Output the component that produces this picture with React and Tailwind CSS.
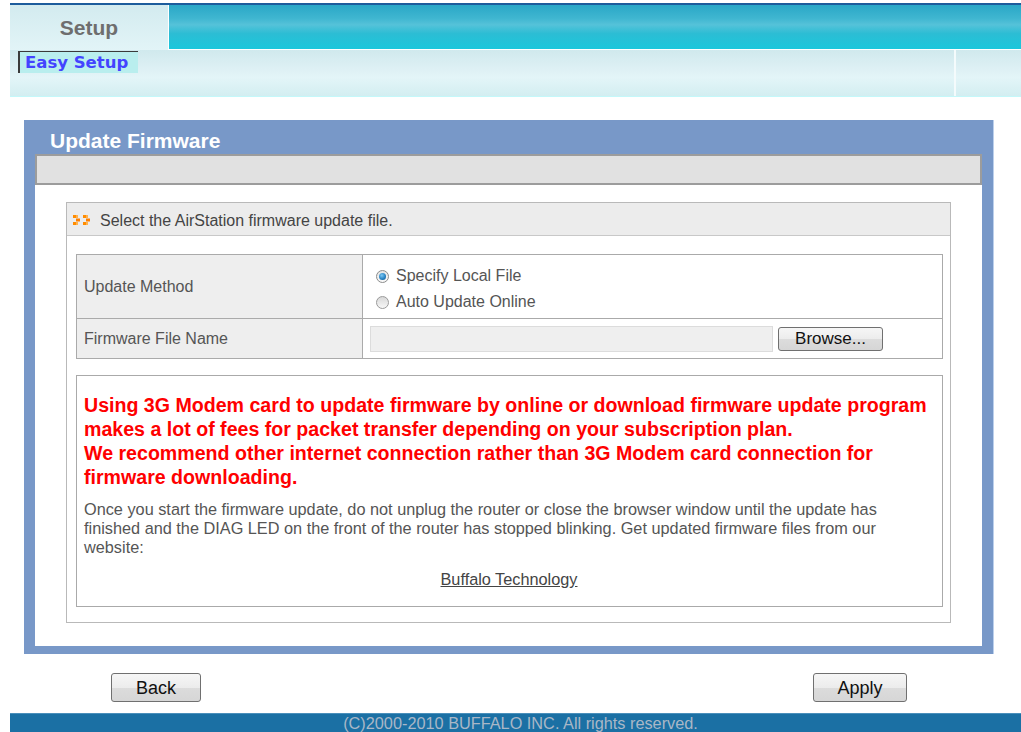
export default function App() {
  const teal =
    "bg-[linear-gradient(to_bottom,#2aa7c7_0%,#3fb6d0_30%,#55c2d9_45%,#2cbdd4_65%,#1ac7dc_100%)]";
  const pale =
    "bg-[linear-gradient(to_bottom,#d0e9ed_0%,#dff1f5_45%,#e3f5f8_60%,#d3eef1_100%)]";
  const btn =
    "rounded-[3px] border border-[#707070] bg-[linear-gradient(to_bottom,#f6f6f6_0%,#ececec_50%,#dcdcdc_51%,#d6d6d6_100%)] leading-none text-[#111]";

  return (
    <div className="w-[1021px] h-[732px] overflow-hidden bg-white font-['Liberation_Sans',Arial,sans-serif] flex flex-col">
      {/* navigation header */}
      <header className="ml-[10px] pt-[3px]">
        <div className="h-[2px] bg-[#1d5c9c]" />
        <div className="flex h-[45px]">
          <div className="w-[159px] border-r border-white bg-[linear-gradient(to_bottom,#d3ebef,#e2f4f7)] flex items-center justify-center">
            <span className="text-[21px] font-bold text-[#6e6e6e] leading-none">Setup</span>
          </div>
          <div className={`flex-1 border-b border-white ${teal}`} />
        </div>
        <div className="flex h-[47px] border-b border-[#c4f8fa]">
          <div className={`flex-1 ${pale}`}>
            <div className="ml-[8px] mt-[1px] w-[120px] h-[22px] border-l-[2px] border-t border-[#3a3a3a] bg-[#b9eeee] flex items-center pl-[5px] pt-[2px]">
              <span className="font-['DejaVu_Sans',Verdana,sans-serif] font-bold text-[16.5px] text-[#4343ff] leading-none">
                Easy Setup
              </span>
            </div>
          </div>
          <div className="w-[2px] bg-[#f4fbfc]" />
          <div className={`w-[65px] ${pale}`} />
        </div>
      </header>

      {/* main panel */}
      <section className="mt-[23px] ml-[24px] w-[970px] bg-[#7898c8] px-[11px] pb-[8px] border-r border-[#bcd0ec]">
        <div className="h-[34px] pl-[15px] pt-[9px]">
          <h1 className="text-[21px] leading-[24px] font-bold text-white">Update Firmware</h1>
        </div>
        <div className="bg-white h-[492px] flex flex-col">
          <div className="h-[31px] border-2 border-[#9c9c9c] bg-[#e1e1e1]" />

          <div className="mx-[31px] mt-[17px] h-[421px] border border-[#b9b9b9]">
            <div className="h-[33px] bg-[#ececec] border-b border-[#c8c8c8] flex items-center pl-[6px] pt-[3px]">
              <svg width="20" height="10" viewBox="0 0 20 10" className="mr-[7px] mb-[2px]">
                <rect x="0" y="0" width="3" height="3" fill="#ff8c00" />
                <rect x="3" y="0" width="2" height="3" fill="#ffb24d" />
                <rect x="3" y="3.5" width="4" height="3" fill="#ff8000" />
                <rect x="0" y="7" width="3" height="3" fill="#ff8c00" />
                <rect x="3" y="7" width="2" height="3" fill="#ffb24d" />
                <rect x="10" y="0" width="3" height="3" fill="#ff8c00" />
                <rect x="13" y="0" width="2" height="3" fill="#ffb24d" />
                <rect x="13" y="3.5" width="4" height="3" fill="#ff8000" />
                <rect x="10" y="7" width="3" height="3" fill="#ff8c00" />
                <rect x="13" y="7" width="2" height="3" fill="#ffb24d" />
              </svg>
              <span className="text-[16px] text-[#444]">Select the AirStation firmware update file.</span>
            </div>

            {/* settings table */}
            <div className="ml-[9px] mt-[18px] w-[867px] border border-[#aaaaaa] text-[16px]">
              <div className="flex h-[64px] border-b border-[#aaaaaa]">
                <div className="w-[286px] border-r border-[#aaaaaa] bg-[#eeeeee] flex items-center pl-[7px] pt-[1px] text-[#555]">
                  Update Method
                </div>
                <div className="flex-1 pl-[13px] pt-[8px] text-[#555]">
                  <label className="flex items-center h-[26px]">
                    <span className="w-[13px] h-[13px] rounded-full border border-[#8b8c8c] bg-[linear-gradient(to_bottom,#e4e4e4,#fafafa)] flex items-center justify-center mr-[7px]">
                      <span className="w-[7px] h-[7px] rounded-full bg-[radial-gradient(circle_at_40%_35%,#7cc8f4_0%,#2a84c4_55%,#0b4f86_100%)]" />
                    </span>
                    Specify Local File
                  </label>
                  <label className="flex items-center h-[26px]">
                    <span className="w-[13px] h-[13px] rounded-full border border-[#9a9a9a] bg-[linear-gradient(to_bottom,#d8d8d8,#f7f7f7)] mr-[7px]" />
                    Auto Update Online
                  </label>
                </div>
              </div>
              <div className="flex h-[39px]">
                <div className="w-[286px] border-r border-[#aaaaaa] bg-[#eeeeee] flex items-center pl-[7px] pt-[1px] text-[#555]">
                  Firmware File Name
                </div>
                <div className="flex-1 flex items-center pl-[7px]">
                  <div className="w-[403px] h-[26px] bg-[#efefef] border border-[#dcdcdc]" />
                  <button className={`ml-[5px] w-[105px] h-[24px] text-[17px] ${btn}`}>Browse...</button>
                </div>
              </div>
            </div>

            {/* notice */}
            <div className="ml-[9px] mt-[16px] w-[867px] h-[232px] border border-[#aaaaaa] pl-[7px] pt-[17px]">
              <p className="text-[19.6px] leading-[24px] font-bold text-[#ff0000] whitespace-nowrap">
                Using 3G Modem card to update firmware by online or download firmware update program
                <br />
                makes a lot of fees for packet transfer depending on your subscription plan.
                <br />
                We recommend other internet connection rather than 3G Modem card connection for
                <br />
                firmware downloading.
              </p>
              <p className="mt-[11px] text-[16.3px] leading-[19px] text-[#555] whitespace-nowrap">
                Once you start the firmware update, do not unplug the router or close the browser window until the update has
                <br />
                finished and the DIAG LED on the front of the router has stopped blinking. Get updated firmware files from our
                <br />
                website:
              </p>
              <p className="mt-[13px] pr-[8px] text-center text-[16.3px] leading-[19px]">
                <a className="underline text-[#444]">Buffalo Technology</a>
              </p>
            </div>
          </div>
        </div>
      </section>

      {/* actions */}
      <div className="mt-[19px] flex justify-between pl-[111px] pr-[114px]">
        <button className={`w-[90px] h-[29px] text-[18px] ${btn}`}>Back</button>
        <button className={`w-[94px] h-[29px] text-[18px] ${btn}`}>Apply</button>
      </div>

      <footer className="mt-[11px] ml-[10px] h-[19px] bg-[#1b70a4] border-t border-[#4a8fbb] pl-[10px] text-center text-[16.3px] leading-[19px] text-[#a9b7c7]">
        (C)2000-2010 BUFFALO INC. All rights reserved.
      </footer>
    </div>
  );
}
